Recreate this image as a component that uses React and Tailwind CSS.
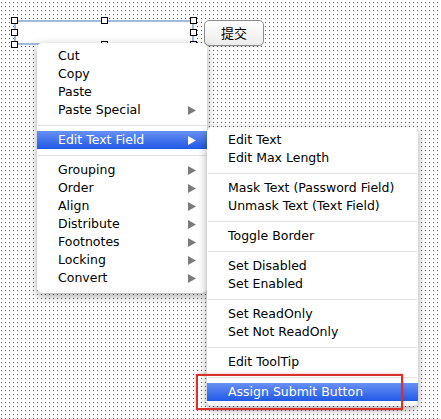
import React from "react";

const Arrow = ({ white }) => (
  <svg width="8" height="9" viewBox="0 0 8 9" className="shrink-0">
    <polygon points="0,0 8,4.5 0,9" fill={white ? "#ffffff" : "#7b7b7b"} />
  </svg>
);

const Item = ({ label, sub, active }) => (
  <div
    className={
      "h-[18px] flex items-center justify-between pl-[21px] pr-[11px] pt-px text-[12.5px] leading-none " +
      (active
        ? "bg-[linear-gradient(to_bottom,#6890f4,#2159e6)] text-white"
        : "text-black")
    }
  >
    <span>{label}</span>
    {sub && <Arrow white={active} />}
  </div>
);

const Sep = () => (
  <div className="h-[12px] flex items-center px-px">
    <div className="h-px w-full bg-[#e2e2e2]" />
  </div>
);

const Handle = ({ className }) => (
  <div className={"absolute w-[7px] h-[7px] border border-black bg-white " + className} />
);

export default function App() {
  return (
    <div className="relative w-[441px] h-[419px] overflow-hidden font-['DejaVu_Sans',sans-serif] bg-[#4a538f] bg-[linear-gradient(to_bottom,transparent_1px,#fff_1px),linear-gradient(to_right,transparent_1px,#fff_1px)] bg-[length:4px_4px] bg-[position:1px_2px]">
      {/* canvas controls */}
      <div className="flex items-start pt-[20px] pl-[14px] gap-[10px]">
        <div className="relative w-[180px] h-[25px]">
          <div className="h-full border-2 border-[#9fbbd8] bg-white" />
          <Handle className="-left-[3px] -top-[3px]" />
          <Handle className="left-[87px] -top-[3px]" />
          <Handle className="-right-[3px] -top-[3px]" />
          <Handle className="-left-[3px] top-[9px]" />
          <Handle className="-right-[3px] top-[9px]" />
          <Handle className="-left-[3px] -bottom-[3px]" />
          <Handle className="left-[87px] -bottom-[3px]" />
          <Handle className="-right-[3px] -bottom-[3px]" />
        </div>
        <div className="w-[60px] h-[26px] rounded-[5px] border border-[#8c8c8c] bg-[linear-gradient(to_bottom,#ffffff,#ececec)] flex items-center justify-center text-[13px] text-black font-['Noto_Sans_CJK_SC',sans-serif] shadow-[0_1px_1px_rgba(0,0,0,0.15)]">
          提交
        </div>
      </div>

      {/* main context menu */}
      <div className="absolute left-[37px] top-[43px] w-[170px] pt-[4px] pb-[6px] bg-white rounded-[5px] shadow-[0_3px_10px_rgba(0,0,0,0.35)]">
        <Item label="Cut" />
        <Item label="Copy" />
        <Item label="Paste" />
        <Item label="Paste Special" sub />
        <Sep />
        <Item label="Edit Text Field" sub active />
        <Sep />
        <Item label="Grouping" sub />
        <Item label="Order" sub />
        <Item label="Align" sub />
        <Item label="Distribute" sub />
        <Item label="Footnotes" sub />
        <Item label="Locking" sub />
        <Item label="Convert" sub />
      </div>

      {/* submenu */}
      <div className="absolute left-[207px] top-[127px] w-[211px] pt-[4px] pb-[5px] bg-white rounded-[5px] shadow-[0_3px_10px_rgba(0,0,0,0.35)]">
        <Item label="Edit Text" />
        <Item label="Edit Max Length" />
        <Sep />
        <Item label="Mask Text (Password Field)" />
        <Item label="Unmask Text (Text Field)" />
        <Sep />
        <Item label="Toggle Border" />
        <Sep />
        <Item label="Set Disabled" />
        <Item label="Set Enabled" />
        <Sep />
        <Item label="Set ReadOnly" />
        <Item label="Set Not ReadOnly" />
        <Sep />
        <Item label="Edit ToolTip" />
        <Sep />
        <Item label="Assign Submit Button" active />
      </div>

      {/* red annotation box */}
      <div className="absolute left-[196px] top-[374px] w-[207px] h-[36px] border-2 border-[#d8312c] shadow-[0_0_2px_rgba(200,40,40,0.5)]" />
    </div>
  );
}
